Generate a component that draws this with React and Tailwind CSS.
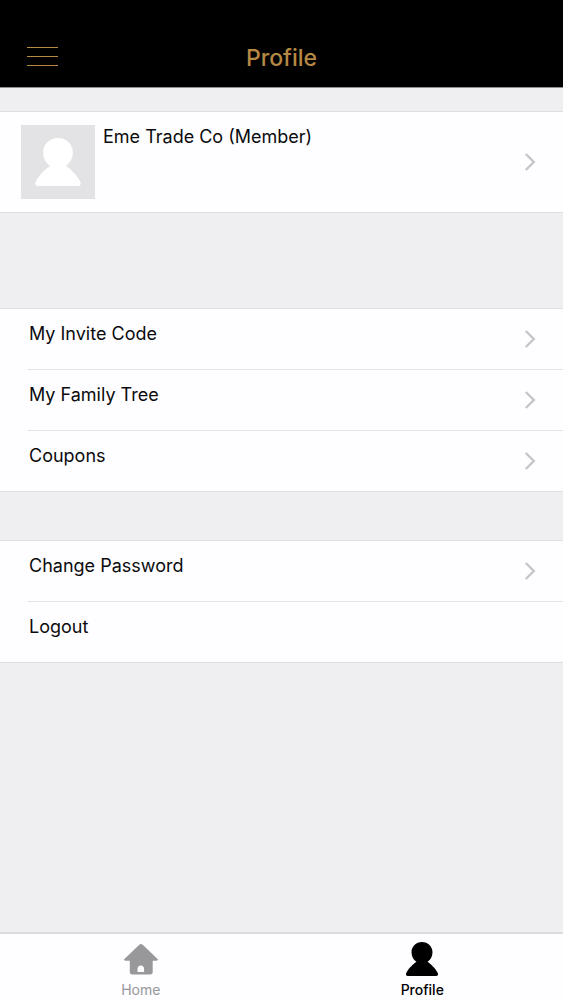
const ACCOUNT_LINKS = [
  { label: 'My Invite Code', href: '#invite-code' },
  { label: 'My Family Tree', href: '#family-tree' },
  { label: 'Coupons', href: '#coupons' },
];

function ChevronIcon() {
  return (
    <svg
      viewBox="0 0 12 20"
      className="h-5 w-3 shrink-0 self-center text-[#c6c6ca]"
      fill="none"
      stroke="currentColor"
      strokeWidth="2.4"
      aria-hidden="true"
    >
      <path d="M1.8 2 9.8 10 1.8 18" />
    </svg>
  );
}

function PersonIcon({ className }) {
  return (
    <svg viewBox="0 0 34 36" className={className} fill="currentColor" aria-hidden="true">
      <path d="M17 1C11 1 6.500 5.500 6.500 11.200c0 4 1.700 7.300 5 9.500C8.500 22.700 4 27 1.600 31.200.3 33.500 1 35 3 35h28c2 0 2.700-1.500 1.400-3.800C30 27 25.500 22.700 22.500 20.700c3.300-2.200 5-5.500 5-9.500C27.500 5.500 23 1 17 1z" />
    </svg>
  );
}

function HomeIcon({ className }) {
  return (
    <svg viewBox="0 0 34 31" className={className} fill="currentColor" aria-hidden="true">
      <path
        fillRule="evenodd"
        d="M15.300 1.200c1.100-.9 2.300-.9 3.400 0l14.600 14c1.100 1.100.7 2-.7 2H28.700v11.300c0 1.600-.9 2.500-2.500 2.500H8.300c-1.600 0-2.500-.9-2.500-2.500V17.200H1.400c-1.400 0-1.800-.9-.7-2zM13.500 28.600h6.600v-3.200c0-2-1.300-3.300-3.300-3.300s-3.300 1.300-3.300 3.300z"
      />
    </svg>
  );
}

function Group({ className = '', children }) {
  return (
    <ul className={`border-t border-[#dfdee2] bg-[#fefdff] ${className}`}>{children}</ul>
  );
}

function Row({ last = false, children }) {
  return (
    <li className={last ? 'border-b border-[#dfdee2]' : 'ml-7 border-b border-[#e3e2e6]'}>
      <div className={last ? 'pl-7' : ''}>{children}</div>
    </li>
  );
}

const rowClass = 'flex h-15 w-full justify-between pl-px pr-[27px] py-[13px] text-left leading-6';

function LinkRow({ label, href, last }) {
  return (
    <Row last={last}>
      <a href={href} className={rowClass}>
        <span>{label}</span>
        <ChevronIcon />
      </a>
    </Row>
  );
}

export default function App() {
  return (
    <div className="flex min-h-screen flex-col bg-[#efeef1] font-['Inter',sans-serif] text-[18px] text-[#0b0b0d]">
      <header className="grid grid-cols-[1fr_auto_1fr] items-center border-b border-[#8e8d90] bg-black px-[27px] pt-7 text-[#b58843]">
        <button type="button" aria-label="Menu" className="flex h-[59px] w-[31px] items-center">
          <svg
            viewBox="0 0 31 21"
            className="h-[21px] w-[31px]"
            stroke="currentColor"
            strokeWidth="1"
            aria-hidden="true"
          >
            <path d="M0 .5h31M0 9.500h31M0 18.500h31" />
          </svg>
        </button>
        <h1 className="text-[23px] font-medium leading-7">Profile</h1>
      </header>

      <main className="flex-1 pt-[23px]">
        <a
          href="#member"
          className="flex border-y border-[#dfdee2] bg-[#fefdff] py-[13px] pl-[21px] pr-[27px]"
        >
          <span className="flex size-[74px] shrink-0 items-center justify-center bg-[#e3e2e5] text-white">
            <PersonIcon className="h-[52px] w-12" />
          </span>
          <span className="ml-2 flex-1 leading-6">Eme Trade Co (Member)</span>
          <ChevronIcon />
        </a>

        <Group className="mt-[95px]">
          {ACCOUNT_LINKS.map((link, i) => (
            <LinkRow key={link.href} {...link} last={i === ACCOUNT_LINKS.length - 1} />
          ))}
        </Group>

        <Group className="mt-12">
          <LinkRow label="Change Password" href="#change-password" />
          <Row last>
            <button type="button" className={rowClass}>
              Logout
            </button>
          </Row>
        </Group>
      </main>

      <nav className="flex border-t-2 border-[#dcdbdf] bg-[#fefdff] text-[14px] leading-4">
        <a
          href="#home"
          className="flex flex-1 flex-col items-center gap-[5px] pt-[7px] pb-0.5 text-[#98979a]"
        >
          <HomeIcon className="h-9 w-[34px]" />
          <span>Home</span>
        </a>
        <a
          href="#profile"
          aria-current="page"
          className="flex flex-1 flex-col items-center gap-[5px] pt-[7px] pb-0.5 font-medium text-black"
        >
          <PersonIcon className="h-9 w-[34px]" />
          <span>Profile</span>
        </a>
      </nav>
    </div>
  );
}
